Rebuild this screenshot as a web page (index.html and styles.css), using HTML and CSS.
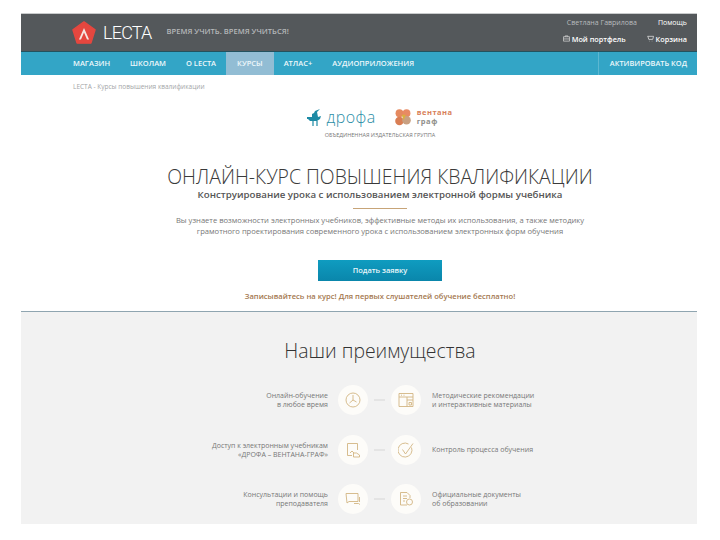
FILE: index.html
```html
<!DOCTYPE html>
<html lang="ru">
<head>
  <meta charset="UTF-8" />
  <title>LECTA - Курсы повышения квалификации</title>
  <link rel="stylesheet" href="styles.css">
</head>
<body>
  <div class="page">

    <!-- Header -->
    <header class="top-bar">
      <div class="brand">
        <svg class="brand-mark" width="24" height="24" viewBox="0 0 26 26">
          <path d="M13 1 L25 9.5 L20.5 24 L5.5 24 L1 9.5 Z" fill="#e5473f" stroke="#e5473f" stroke-width="1.5" stroke-linejoin="round"/>
          <path d="M7.5 20 L13 7.5 L18.5 20 L16.3 20 L13 12.5 L9.7 20 Z" fill="#f6e6e2"/>
        </svg>
        <span class="brand-name">LECTA</span>
        <span class="tagline">ВРЕМЯ УЧИТЬ. ВРЕМЯ УЧИТЬСЯ!</span>
      </div>
      <div class="user-box">
        <div class="user-row">
          <span class="user-name">Светлана Гаврилова</span>
          <a href="#" class="user-link help">Помощь</a>
        </div>
        <div class="user-row">
          <a href="#" class="user-link big">
            <svg width="7" height="7" viewBox="0 0 8 8"><path d="M.5 2h7v5h-7zM2.5 2V1h3v1M.5 4.500h7" fill="none" stroke="#ddd" stroke-width=".8"/></svg>
            Мой портфель
          </a>
          <a href="#" class="user-link big">
            <svg width="7" height="7" viewBox="0 0 8 8"><path d="M.5 1.500h7L6.500 5H2L1 1.500M2.500 7h.5M5.500 7H6" fill="none" stroke="#ddd" stroke-width=".9"/></svg>
            Корзина
          </a>
        </div>
      </div>
    </header>

    <!-- Navigation -->
    <nav class="main-nav">
      <div class="nav-items">
        <a href="#">МАГАЗИН</a>
        <a href="#">ШКОЛАМ</a>
        <a href="#">О LECTA</a>
        <a href="#" class="active">КУРСЫ</a>
        <a href="#">АТЛАС+</a>
        <a href="#">АУДИОПРИЛОЖЕНИЯ</a>
      </div>
      <a href="#" class="activate">АКТИВИРОВАТЬ КОД</a>
    </nav>

    <div class="breadcrumb">LECTA - Курсы повышения квалификации</div>

    <!-- Intro -->
    <section class="intro">
      <div class="publishers">
        <div class="drofa">
          <svg width="16" height="17" viewBox="0 0 16 17">
            <path d="M0 8h5V5l2-1 1-2 5-2-3 3 1 5 3-1-1 3-3 2H3L1 10H0z" fill="#1d8aa5"/>
            <path d="M6 12v5M10 12v5" stroke="#1d8aa5" stroke-width="1.200"/>
          </svg>
          <span>дрофа</span>
        </div>
        <div class="ventana">
          <svg width="18" height="17" viewBox="0 0 24 24">
            <circle cx="7" cy="6" r="5.500" fill="#e5895f"/>
            <circle cx="17" cy="6" r="5.500" fill="#e88a63"/>
            <circle cx="7" cy="17" r="6" fill="#d97e54"/>
            <circle cx="17" cy="16" r="6" fill="#c9a081"/>
            <path d="M10 8l3 8 3-8z" fill="#d9b03f"/>
          </svg>
          <span>вентана<br><em>граф</em></span>
        </div>
      </div>
      <div class="publishers-note">ОБЪЕДИНЕННАЯ ИЗДАТЕЛЬСКАЯ ГРУППА</div>

      <h1>ОНЛАЙН-КУРС ПОВЫШЕНИЯ КВАЛИФИКАЦИИ</h1>
      <div class="subtitle">Конструирование урока с использованием электронной формы учебника</div>
      <div class="divider"></div>
      <p class="lead">Вы узнаете возможности электронных учебников, эффективные методы их использования, а также методику<br>грамотного проектирования современного урока с использованием электронных форм обучения</p>

      <a href="#" class="apply-btn">Подать заявку</a>
      <div class="free-note">Записывайтесь на курс! Для первых слушателей обучение бесплатно!</div>
    </section>

    <!-- Advantages -->
    <section class="advantages">
      <h2>Наши преимущества</h2>

      <div class="adv-row">
        <div class="adv-text left">Онлайн-обучение<br>в любое время</div>
        <div class="adv-icons">
          <span class="circle">
            <svg width="16" height="16" viewBox="0 0 16 16"><circle cx="8" cy="8" r="7"/><path d="M8 3v5l-3.500 3M8 8l3.500 2"/></svg>
          </span>
          <span class="dash"></span>
          <span class="circle">
            <svg width="16" height="16" viewBox="0 0 16 16"><path d="M1 1.500h14v13H1zM1 5h14M3 3.200h1M5.500 3.200h1M9 5v9.500M9 8h6M11 10.500h2.500v2.500H11z"/></svg>
          </span>
        </div>
        <div class="adv-text">Методические рекомендации<br>и интерактивные материалы</div>
      </div>

      <div class="adv-row">
        <div class="adv-text left">Доступ к электронным учебникам<br>«ДРОФА – ВЕНТАНА-ГРАФ»</div>
        <div class="adv-icons">
          <span class="circle">
            <svg width="16" height="16" viewBox="0 0 16 16"><path d="M12.500 8V1.500h-10v12H7M5 11l2-2 2 2M8.500 15v-4h3l3 2v2z"/></svg>
          </span>
          <span class="dash"></span>
          <span class="circle">
            <svg width="16" height="16" viewBox="0 0 16 16"><path d="M13.500 5.500A7 7 0 1 1 10.500 2M4.500 7.500l3 4.500L15 1.500"/></svg>
          </span>
        </div>
        <div class="adv-text">Контроль процесса обучения</div>
      </div>

      <div class="adv-row">
        <div class="adv-text left">Консультации и помощь<br>преподавателя</div>
        <div class="adv-icons">
          <span class="circle">
            <svg width="16" height="16" viewBox="0 0 16 16"><path d="M1 2.500h12v8H4l-2 1.500zM9 12.500h4.500l1.500 1M14.500 6v5"/></svg>
          </span>
          <span class="dash"></span>
          <span class="circle">
            <svg width="16" height="16" viewBox="0 0 16 16"><path d="M9 14H2.500V1.500H9l3 3V7M5 5h4M5 7.500h4M5 10h2"/><circle cx="11.500" cy="11" r="3"/></svg>
          </span>
        </div>
        <div class="adv-text">Официальные документы<br>об образовании</div>
      </div>
    </section>

  </div>
</body>
</html>
```

FILE: styles.css
```css
body {
  margin: 0;
  padding: 0;
  background: #fff;
  font-family: 'Open Sans', sans-serif;
  color: #555;
}

.page {
  margin: 13px 23px 16px 21px;
}

/* Header */
.top-bar {
  display: flex;
  justify-content: space-between;
  height: 37px;
  padding: 0 10px 0 51px;
  background: #54585b;
  border-top: 1px solid #c9cbcc;
  border-bottom: 1px solid #23525f;
}

.brand {
  display: flex;
  align-items: center;
}

.brand-mark {
  margin-right: 7px;
}

.brand-name {
  font-family: Roboto, sans-serif;
  font-size: 18px;
  font-weight: 300;
  letter-spacing: -0.8px;
  color: #fff;
  margin-right: 15px;
}

.tagline {
  font-size: 7.600px;
  font-weight: 600;
  color: #b4b7b9;
  margin-bottom: 3px;
}

.user-box {
  display: flex;
  flex-direction: column;
  align-items: flex-end;
  gap: 6px;
  padding-top: 4px;
  font-size: 7px;
}

.user-row {
  display: flex;
  gap: 21px;
  height: 10px;
  line-height: 10px;
}

.user-name {
  color: #b9bcbe;
}

.user-link {
  color: #fff;
  font-weight: 600;
  text-decoration: none;
}

.user-link.big {
  font-size: 7.300px;
}

.help {
  font-weight: 400;
}

/* Navigation */
.main-nav {
  display: flex;
  justify-content: space-between;
  height: 23px;
  background: #33a5c6;
}

.nav-items {
  display: flex;
  padding-left: 42px;
}

.nav-items a {
  padding: 0 10px;
  font-size: 7.500px;
  font-weight: 600;
  line-height: 23px;
  color: #eef8fb;
  text-decoration: none;
}

.nav-items a.active {
  padding: 0 11px;
  background: #92bdd4;
}

.activate {
  padding: 0 10px 0 11px;
  border-left: 1px solid #5cb7d1;
  font-size: 7.400px;
  font-weight: 600;
  line-height: 23px;
  color: #eef8fb;
  text-decoration: none;
}

.breadcrumb {
  padding: 6px 0 0 52px;
  height: 12px;
  font-size: 6.500px;
  line-height: 11px;
  color: #a3a5a7;
}

/* Intro */
.intro {
  text-align: center;
  padding: 12px 0 0 42px;
  height: 206px;
}

.publishers {
  display: flex;
  justify-content: center;
  align-items: center;
  gap: 18px;
  height: 24px;
}

.drofa {
  display: flex;
  align-items: flex-end;
  gap: 3px;
  font-size: 16px;
  font-weight: 300;
  line-height: 18px;
  letter-spacing: 0.5px;
  color: #2b8ea6;
}

.ventana {
  display: flex;
  align-items: center;
  gap: 5px;
  text-align: left;
  font-size: 7.500px;
  font-weight: 700;
  line-height: 9px;
  letter-spacing: 0.5px;
  color: #d87f5a;
}

.ventana em {
  font-style: normal;
  color: #8f8f8b;
}

.publishers-note {
  margin-top: 2px;
  font-size: 5.500px;
  line-height: 9px;
  color: #777;
}

.intro h1 {
  margin: 27px 0 2px;
  font-size: 19.400px;
  font-weight: 300;
  line-height: 20px;
  color: #3a3a3a;
}

.subtitle {
  font-size: 9.700px;
  font-weight: 600;
  line-height: 12px;
  color: #555;
}

.divider {
  width: 54px;
  height: 1px;
  margin: 7px auto 0;
  background: #c7a478;
}

.lead {
  margin: 6px 0 0;
  font-size: 7.600px;
  line-height: 11px;
  color: #777;
}

.apply-btn {
  display: block;
  width: 124px;
  height: 21px;
  margin: 23px auto 0;
  background: linear-gradient(#0f9cc0, #0a86ab);
  font-size: 7.500px;
  font-weight: 600;
  line-height: 21px;
  color: #e8f6fa;
  text-decoration: none;
}

.free-note {
  margin-top: 10px;
  font-size: 7.600px;
  font-weight: 600;
  line-height: 10px;
  color: #a4784f;
}

/* Advantages */
.advantages {
  height: 212px;
  padding-left: 42px;
  background: #f2f2f2;
  border-top: 1px solid #8fa5b0;
}

.advantages h2 {
  margin: 0;
  padding-top: 26px;
  height: 47px;
  font-size: 19.400px;
  font-weight: 300;
  line-height: 26px;
  text-align: center;
  color: #333;
}

.adv-row {
  display: flex;
  align-items: center;
  height: 30px;
  margin-bottom: 19.500px;
}

.adv-text {
  flex: 1;
  font-size: 7px;
  line-height: 9px;
  color: #777;
}

.adv-text.left {
  text-align: right;
}

.adv-icons {
  display: flex;
  align-items: center;
  margin: 0 11px 0 10px;
}

.circle {
  display: flex;
  align-items: center;
  justify-content: center;
  width: 30px;
  height: 30px;
  border-radius: 50%;
  background: #fdfcf9;
}

.circle svg {
  fill: none;
  stroke: #d3b682;
  stroke-width: 0.900;
}

.dash {
  width: 11px;
  height: 2px;
  margin: 0 6px;
  background: #e4e4e4;
}
```
